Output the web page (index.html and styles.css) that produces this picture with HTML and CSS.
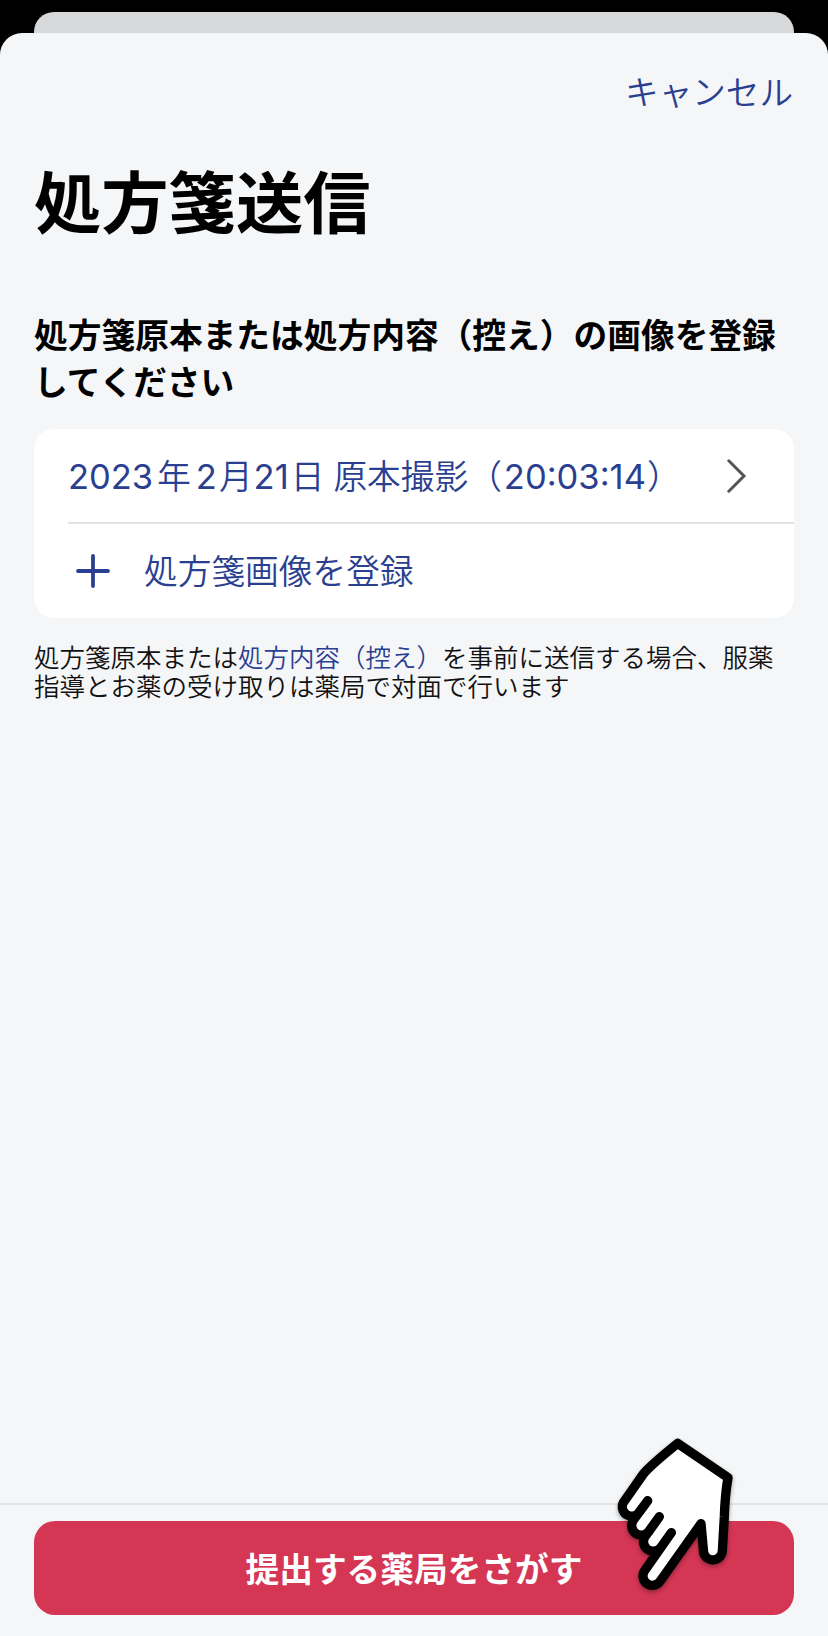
FILE: index.html
```html
<!DOCTYPE html>
<html lang="ja">
<head>
  <meta charset="UTF-8">
  <meta name="viewport" content="width=device-width, initial-scale=1.0">
  <title>処方箋送信</title>
  <link rel="stylesheet" href="styles.css">
</head>
<body>

<div class="back-sheet"></div>

<div class="sheet">
  <header class="nav">
    <a class="cancel" href="#">キャンセル</a>
  </header>

  <main class="content">
    <h1 class="title">処方箋送信</h1>
    <h2 class="lead">処方箋原本または処方内容（控え）の画像を登録<br>してください</h2>

    <div class="card">
      <a class="row" href="#">
        <span class="date"><span class="num year">2023</span>年<span class="num month">2</span>月<span class="num day">21</span>日<span class="kind">原本撮影</span>（<span class="num time">20:03:14</span>）</span>
        <svg class="chevron" width="20" height="34" viewBox="0 0 20 34">
          <path d="M1.8 1.8L17 17L1.8 32.2" fill="none" stroke="#555" stroke-width="3" stroke-linecap="round" stroke-linejoin="miter"/>
        </svg>
      </a>
      <a class="row add" href="#">
        <svg class="plus" width="34" height="34" viewBox="0 0 34 34">
          <path d="M17 2v30M2 17h30" fill="none" stroke="#2b3f91" stroke-width="3.8" stroke-linecap="round"/>
        </svg>
        <span class="label">処方箋画像を登録</span>
      </a>
    </div>

    <p class="note">処方箋原本または<a href="#">処方内容（控え）</a>を事前に送信する場合、服薬<br>指導とお薬の受け取りは薬局で対面で行います</p>
  </main>

  <footer class="footer">
    <button class="submit">提出する薬局をさがす</button>
    <!-- Hand pointing at the button -->
    <svg class="hand" width="150" height="180" viewBox="0 0 450 540">
      <path d="M233 70L384 173Q375 225 373 290L367 394A28.5 28.5 0 0 1 311 398L303 311L180 484A28 28 0 0 1 134 452L214 338L182 383A28 28 0 0 1 137 347L178 290L147 334A28 28 0 0 1 101 299L143 242L116 279A28 28 0 0 1 70 248L130 162Q151 136 233 70Z" fill="#fff" stroke="#000" stroke-width="28" stroke-linejoin="round"/>
    </svg>
  </footer>
</div>

</body>
</html>
```
FILE: styles.css
```css
* {
  box-sizing: border-box;
}
body {
  margin: 0;
  height: 1636px;
  padding-top: 12px;
  background-color: #000;
  font-family: "Noto Sans CJK JP", sans-serif;
  font-weight: 350;
  display: flex;
  flex-direction: column;
  overflow: hidden;
}
a {
  color: #2b3f91;
  text-decoration: none;
}
/* Edge of the screen behind the sheet */
.back-sheet {
  height: 21px;
  margin: 0 34px;
  flex: none;
  background-color: #d7d8da;
  border-radius: 20px 20px 0 0;
}
.sheet {
  flex: 1;
  display: flex;
  flex-direction: column;
  background-color: #f5f6f8;
  border-radius: 22px 22px 0 0;
}
.nav {
  display: flex;
  justify-content: flex-end;
  padding: 33px 35px 0 0;
}
.cancel {
  font-size: 33.6px;
  line-height: 50px;
}
.content {
  flex: 1;
  padding: 0 34px;
}
.title {
  margin: 33px 0 0;
  font-size: 67.3px;
  line-height: 100px;
  font-weight: 600;
}
.lead {
  margin: 61px 0 0;
  font-size: 33.73px;
  line-height: 47px;
  font-weight: 600;
  white-space: nowrap;
}
.card {
  margin-top: 25px;
  background-color: #fff;
  border-radius: 20px;
}
.row {
  display: flex;
  align-items: center;
  justify-content: space-between;
  height: 95px;
  margin-left: 34px;
  padding-right: 47px;
  border-bottom: 2px solid #e3e3e4;
  font-size: 33.7px;
  white-space: nowrap;
}
.date {
  padding-bottom: 3px;
}
.row.add {
  height: 94px;
  justify-content: flex-start;
  gap: 34px;
  padding: 0 0 1px 8px;
  border-bottom: none;
}
.label {
  padding-bottom: 3px;
}
.num {
  font-family: Inter, sans-serif;
  font-weight: 400;
  font-size: 34.5px;
}
.year {
  margin-right: 4px;
}
.month {
  margin: 0 2px 0 5px;
}
.day {
  margin: 0 2px 0 1px;
}
.kind {
  margin-left: 9px;
}
.time {
  margin: 0 1px 0 2px;
}
.note {
  margin: 23px 0 0;
  font-size: 25.5px;
  line-height: 29.3px;
  color: #111;
  white-space: nowrap;
}
.footer {
  position: relative;
  height: 133px;
  padding: 16px 34px 0;
  border-top: 2px solid #e1e3e5;
}
.submit {
  width: 100%;
  height: 94px;
  padding: 0 0 2px;
  border: none;
  border-radius: 21px;
  background-color: #d43654;
  color: #fff;
  font-family: inherit;
  font-size: 33.7px;
  font-weight: 600;
}
.hand {
  position: absolute;
  left: 600px;
  top: -85px;
  filter: drop-shadow(0 2px 2px rgba(0, 0, 0, 0.35));
}
```
